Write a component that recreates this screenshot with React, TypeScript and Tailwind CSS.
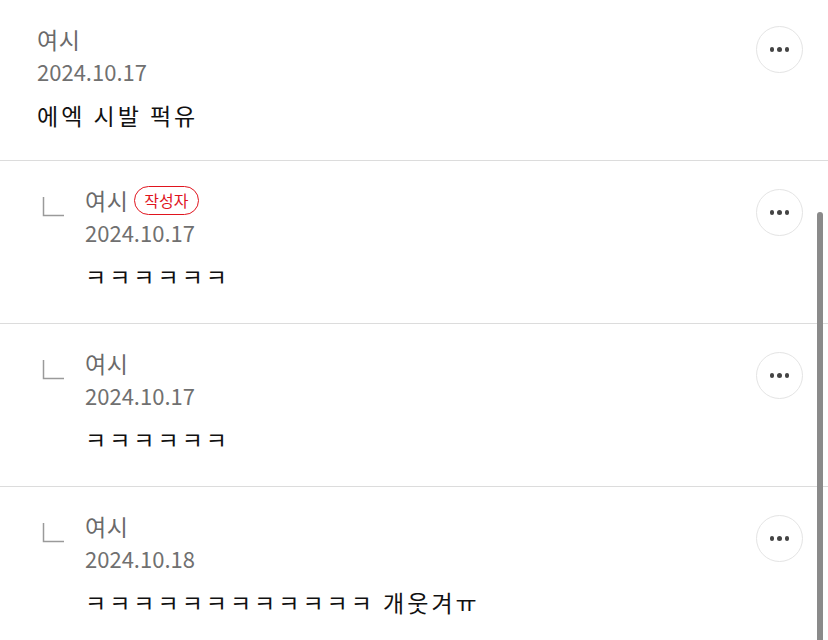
import React from 'react';

type Comment = {
  name: string;
  date: string;
  text: string;
  reply?: boolean;
  author?: boolean;
};

const comments: Comment[] = [
  { name: '여시', date: '2024.10.17', text: '에엑 시발 퍽유' },
  { name: '여시', date: '2024.10.17', text: 'ㅋㅋㅋㅋㅋㅋ', reply: true, author: true },
  { name: '여시', date: '2024.10.17', text: 'ㅋㅋㅋㅋㅋㅋ', reply: true },
  { name: '여시', date: '2024.10.18', text: 'ㅋㅋㅋㅋㅋㅋㅋㅋㅋㅋㅋㅋ 개웃겨ㅠ', reply: true },
];

const ReplyMark = () => (
  <svg width="24" height="22" viewBox="0 0 24 22" className="shrink-0 mt-[35px] ml-[42px]">
    <path d="M1.5 1 V19.5 H22" fill="none" stroke="#9a9a9a" strokeWidth="1.5" />
  </svg>
);

const MoreButton = () => (
  <button className="shrink-0 w-[47px] h-[47px] rounded-full border border-[#e4e4e4] bg-white flex items-center justify-center gap-[3px]">
    <span className="w-[4.5px] h-[4.5px] rounded-full bg-[#444]" />
    <span className="w-[4.5px] h-[4.5px] rounded-full bg-[#444]" />
    <span className="w-[4.5px] h-[4.5px] rounded-full bg-[#444]" />
  </button>
);

const CommentRow = ({ c, last }: { c: Comment; last: boolean }) => (
  <div className={`flex ${last ? '' : 'border-b border-[#dcdcdc]'}`}>
    {c.reply ? <ReplyMark /> : <div className="w-[37px] shrink-0" />}
    <div className={`flex-1 pt-[23px] ${c.reply ? 'ml-[19px] pb-[31px]' : 'pb-[29px]'}`}>
      <div className="flex items-center h-[32px]">
        <span className="text-[23px] tracking-[0.5px] text-[#6a6a6a]">{c.name}</span>
        {c.author && (
          <span className="ml-[6px] h-[29px] px-[9px] flex items-center rounded-full border border-[#e0141e] text-[16px] text-[#e0141e]">
            작성자
          </span>
        )}
      </div>
      <div className="h-[32px] flex items-center text-[22px] text-[#707070]">{c.date}</div>
      <div className="mt-[12px] h-[32px] flex items-center text-[23px] tracking-[3px] text-[#111]">{c.text}</div>
    </div>
    <div className={`pr-[25px] ${c.reply ? 'pt-[28px]' : 'pt-[26px]'}`}>
      <MoreButton />
    </div>
  </div>
);

export default function App() {
  return (
    <div
      className="relative w-[828px] h-[640px] overflow-hidden bg-white"
      style={{ fontFamily: '"Noto Sans CJK KR", "Noto Sans", sans-serif' }}
    >
      {comments.map((c, i) => (
        <CommentRow key={i} c={c} last={i === comments.length - 1} />
      ))}
      <div className="absolute right-[5px] top-[212px] w-[6px] h-[440px] rounded-full bg-[#8a8a8a]" />
    </div>
  );
}
